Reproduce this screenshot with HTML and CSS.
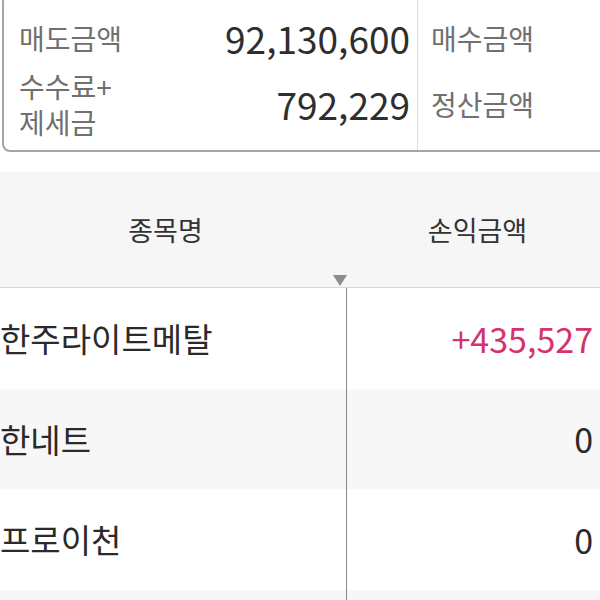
FILE: index.html
```html
<!DOCTYPE html>
<html lang="ko">
<head>
<meta charset="utf-8">
<link rel="stylesheet" href="styles.css">
</head>
<body>
<div class="page">
  <section class="summary">
    <div class="sum-left">
      <div class="sum-row">
        <div class="sum-label">매도금액</div>
        <div class="sum-value">92,130,600</div>
      </div>
      <div class="sum-row tall">
        <div class="sum-label">수수료+<br>제세금</div>
        <div class="sum-value">792,229</div>
      </div>
    </div>
    <div class="sum-right">
      <div class="sum-row">
        <div class="sum-label">매수금액</div>
      </div>
      <div class="sum-row tall">
        <div class="sum-label">정산금액</div>
      </div>
    </div>
  </section>

  <section class="table">
    <div class="thead">
      <div class="th name">종목명</div>
      <div class="th amt">손익금액</div>
      <span class="sort-arrow"></span>
    </div>
    <div class="tr">
      <div class="td name">한주라이트메탈</div>
      <div class="td amt plus">+435,527</div>
    </div>
    <div class="tr alt">
      <div class="td name">한네트</div>
      <div class="td amt">0</div>
    </div>
    <div class="tr">
      <div class="td name">프로이천</div>
      <div class="td amt">0</div>
    </div>
    <div class="tr alt">
      <div class="td name"></div>
      <div class="td amt"></div>
    </div>
  </section>
</div>
</body>
</html>
```

FILE: styles.css
```css
* { box-sizing: border-box; }
html, body {
  margin: 0;
  padding: 0;
  background: #fff;
}
body {
  width: 600px;
  height: 600px;
  overflow: hidden;
  font-family: "Noto Sans CJK KR", "Noto Sans", sans-serif;
}
.page {
  width: 600px;
  overflow: hidden;
}

/* summary box */
.summary {
  display: flex;
  margin-top: -6px;
  margin-left: 2px;
  width: 640px;
  border: 2px solid #a4a4a4;
  border-radius: 8px;
  padding: 0;
}
.sum-left {
  width: 414px;
  border-right: 1px solid #dcdcdc;
  padding: 11px 7px 11px 15px;
}
.sum-right {
  flex: 1;
  padding: 11px 0 11px 13px;
}
.sum-row {
  display: flex;
  align-items: center;
  justify-content: space-between;
  height: 62px;
}
.sum-row.tall {
  height: 70px;
}
.sum-label {
  font-size: 28px;
  line-height: 36px;
  color: #707070;
}
.sum-value {
  font-size: 37px;
  color: #2e2e2e;
  line-height: 40px;
}

/* table */
.table {
  margin-top: 20px;
  margin-left: -16px;
  width: 624px;
}
.thead {
  position: relative;
  display: flex;
  height: 116px;
  background: #f6f6f6;
  border-bottom: 1px solid #dadada;
}
.th {
  display: flex;
  align-items: center;
  justify-content: center;
  font-size: 27px;
  color: #333;
}
.name { width: 363px; }
.amt { flex: 1; }
.sort-arrow {
  position: absolute;
  left: 349px;
  bottom: 1px;
  width: 0;
  height: 0;
  border-left: 7px solid transparent;
  border-right: 7px solid transparent;
  border-top: 11px solid #8c8c8c;
}
.tr {
  display: flex;
  height: 100.6px;
  background: #fff;
}
.tr.alt {
  background: #f7f7f7;
}
.td {
  display: flex;
  align-items: center;
  font-size: 33px;
  color: #2a2a2a;
}
.td.name {
  padding-left: 16px;
  border-right: 1px solid #8a8a8a;
}
.td.amt {
  justify-content: flex-end;
  padding-right: 15px;
  font-size: 34px;
}
.td.plus {
  color: #d4336f;
}
```
